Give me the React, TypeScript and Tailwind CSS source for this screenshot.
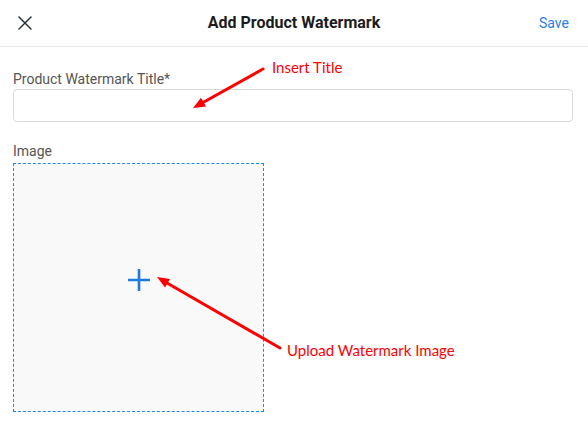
import { X } from "lucide-react";

function Annotations() {
  return (
    <div className="pointer-events-none absolute inset-0">
      <svg width="588" height="422" className="absolute left-0 top-0">
        {/* arrow to title input */}
        <line x1="263" y1="69" x2="203" y2="102.5" stroke="#f00" strokeWidth="3" strokeLinecap="round" />
        <polygon points="193,108 206,106.5 201,97.8" fill="#f00" />
        {/* arrow to upload box */}
        <line x1="280" y1="348" x2="167" y2="283" stroke="#f00" strokeWidth="3" strokeLinecap="round" />
        <polygon points="157,277 170,279 165,287.5" fill="#f00" />
      </svg>
      <span className="absolute left-[272px] top-[57px] font-['Lato'] text-[15px] leading-[20px] text-[#f00]">
        Insert Title
      </span>
      <span className="absolute left-[287px] top-[340px] font-['Lato'] text-[15px] leading-[20px] text-[#f00]">
        Upload Watermark Image
      </span>
    </div>
  );
}

export default function App() {
  return (
    <div className="relative h-[422px] w-[588px] overflow-hidden bg-white font-['Roboto',sans-serif]">
      {/* Header */}
      <div className="grid h-[47px] grid-cols-[1fr_auto_1fr] items-center border-b border-[#ebebeb] px-[19px]">
        <button className="-ml-[6px] flex h-[24px] w-[24px] items-center justify-center text-[#263238]">
          <X size={24} strokeWidth={1.5} />
        </button>
        <h1 className="text-[16px] font-bold leading-none text-[#1c1c1c]">Add Product Watermark</h1>
        <button className="justify-self-end text-[14px] text-[#2b7de9]">Save</button>
      </div>

      {/* Form */}
      <div className="flex flex-col px-[13px] pt-[22px]">
        <label className="text-[14px] leading-[20px] text-[#555]">Product Watermark Title*</label>
        <input
          type="text"
          className="h-[33px] w-[560px] rounded-[4px] border border-[#dadada] bg-white px-3 text-[14px] outline-none"
        />

        <label className="mt-[19px] text-[14px] leading-[20px] text-[#555]">Image</label>
        <div className="mt-[2px] flex h-[249px] w-[251px] items-center justify-center border border-dashed border-[#1e88f0] bg-[#f9f9f9] pb-[16px]">
          <svg width="22" height="22" viewBox="0 0 22 22">
            <path d="M11 0v22M0 11h22" stroke="#1f7ae0" strokeWidth="2.6" />
          </svg>
        </div>
      </div>

      <Annotations />
    </div>
  );
}
